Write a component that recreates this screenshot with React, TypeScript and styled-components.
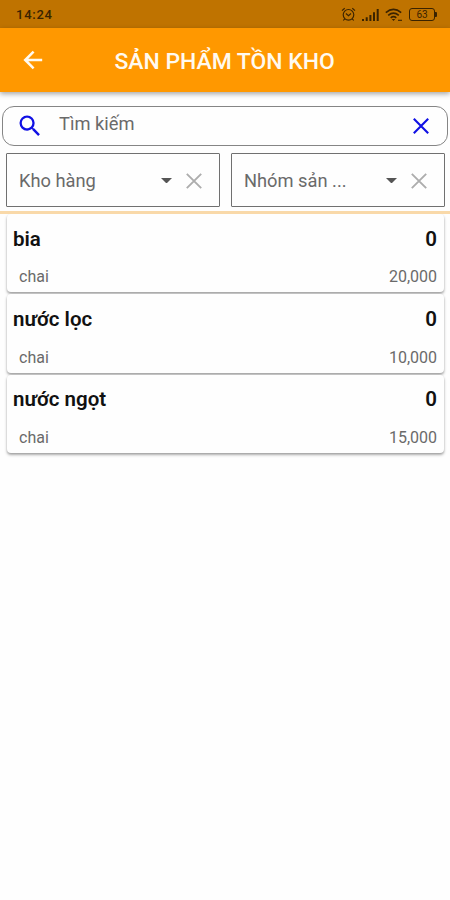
import React from "react";
import styled, { createGlobalStyle } from "styled-components";

const GlobalStyle = createGlobalStyle`
  * { box-sizing: border-box; }
  body {
    margin: 0;
    background: #fefefe;
    font-family: Roboto, "Noto Sans", sans-serif;
  }
  svg { display: block; flex: none; }
`;

const Screen = styled.div`
  width: 450px;
  height: 900px;
  overflow: hidden;
  display: flex;
  flex-direction: column;
`;

const StatusBar = styled.div`
  height: 28px;
  flex: none;
  display: flex;
  align-items: center;
  justify-content: space-between;
  padding: 1px 13px 0 16px;
  background: #bf7300;
  color: #3a2300;
`;

const Clock = styled.span`
  font-size: 13px;
  font-weight: 500;
  line-height: 16px;
  letter-spacing: 0.75px;
`;

const StatusIcons = styled.div`
  display: flex;
  align-items: center;
  gap: 6px;
`;

const AppBar = styled.header`
  height: 64px;
  flex: none;
  display: flex;
  align-items: center;
  padding: 0 21px;
  background: #ff9800;
  color: #fffaf0;
  box-shadow: 0 2px 5px rgba(0, 0, 0, 0.35);
`;

const Title = styled.h1`
  margin: 3px 0 0;
  padding-left: 69.5px;
  font-size: 22.9px;
  font-weight: 500;
  line-height: 28px;
  white-space: nowrap;
`;

const SearchBox = styled.div`
  height: 40px;
  flex: none;
  margin: 14px 2px 0;
  padding: 0 14px 0 13px;
  display: flex;
  align-items: center;
  border: 1px solid #858585;
  border-radius: 12px;
  color: #1010e4;
`;

const Placeholder = styled.span`
  flex: 1;
  padding: 0 0 4px 15px;
  font-size: 18.3px;
  line-height: 24px;
  color: #6a6a6a;
`;

const Filters = styled.div`
  flex: none;
  display: grid;
  grid-template-columns: 1fr 1fr;
  gap: 11px;
  padding: 7px 5px 4px 6px;
`;

const Select = styled.div`
  height: 54px;
  display: flex;
  align-items: center;
  padding: 1px 13px 0 12px;
  border: 1px solid #707070;
  border-radius: 1px;
`;

const SelectLabel = styled.span`
  flex: 1;
  font-size: 18.3px;
  line-height: 24px;
  color: #6a6a6a;
  white-space: nowrap;
`;

const Arrow = styled.span`
  width: 11px;
  margin-right: 10px;
  border: 5.5px solid transparent;
  border-top-color: #555;
  border-bottom: 0;
`;

const Divider = styled.div`
  height: 3px;
  flex: none;
  background: #f9d9a9;
`;

const List = styled.main`
  display: flex;
  flex-direction: column;
  gap: 2px;
  padding: 0 6px 12px 7px;
  overflow: hidden;
`;

const Card = styled.article`
  height: 78.3px;
  flex: none;
  display: flex;
  flex-direction: column;
  gap: 16.7px;
  padding: 12.6px 7px 0 6px;
  border-radius: 4px;
  background: #fefefe;
  box-shadow: 0 2px 3px rgba(0, 0, 0, 0.3), 0 1px 2px rgba(0, 0, 0, 0.12);
`;

const Row = styled.div<{ $detail?: boolean }>`
  display: flex;
  justify-content: space-between;
  padding-left: ${(p) => (p.$detail ? "6px" : "0")};
  font-size: ${(p) => (p.$detail ? "16px" : "20.5px")};
  font-weight: ${(p) => (p.$detail ? 400 : 600)};
  line-height: ${(p) => (p.$detail ? "20px" : "24px")};
  color: ${(p) => (p.$detail ? "#6a6a6a" : "#111")};
`;

const AlarmIcon = () => (
  <svg width="15" height="15" viewBox="0 0 15 15" fill="none" stroke="currentColor" strokeWidth="1.15">
    <circle cx="7.5" cy="7.8" r="5.3" />
    <path d="M1 3.6 3.7 1.2M14 3.6 11.3 1.2M3.7 11.8 2.3 13.5M11.3 11.8l1.4 1.7M4.9 6.5l2.6 2.2 2.5-2.2" />
  </svg>
);

const SignalIcon = () => (
  <svg width="17" height="12" viewBox="0 0 17 12" fill="currentColor">
    <path d="M0 10h2v2H0zM3.7 8.2h2V12h-2zM7.4 6h2v6h-2zM11 3.3h2V12h-2zM14.7 0h2v12h-2z" />
  </svg>
);

const WifiIcon = () => (
  <svg width="18" height="14" viewBox="0 0 18 14" fill="none" stroke="currentColor" strokeWidth="1.6">
    <path d="M.8 4.6Q8.5-1.8 16.2 4.6M3.2 7.3q5.3-4.4 10.6 0M5.7 9.8q2.8-2.3 5.6 0" />
    <path d="m6.8 10.9 1.7 2 1.7-2z" fill="currentColor" stroke="none" />
    <path d="M13 12.3h4" strokeWidth="1.1" />
  </svg>
);

const BatteryShell = styled.div`
  display: flex;
  align-items: center;
`;

const BatteryBody = styled.span`
  width: 26px;
  height: 13px;
  border: 1.3px solid currentColor;
  border-radius: 3px;
  font-size: 10px;
  line-height: 12px;
  text-align: center;
`;

const BatteryTip = styled.span`
  width: 2px;
  height: 5px;
  border-radius: 0 1px 1px 0;
  background: currentColor;
`;

const BackIcon = () => (
  <svg width="24" height="24" viewBox="0 0 24 24" fill="none" stroke="currentColor" strokeWidth="2.5">
    <path d="M21.2 12H4.2M12.6 3.6 4.2 12l8.4 8.4" />
  </svg>
);

const SearchIcon = () => (
  <svg width="28" height="28" viewBox="0 0 24 24" fill="currentColor">
    <path d="M15.5 14h-.79l-.28-.27A6.471 6.471 0 0 0 16 9.5 6.5 6.5 0 1 0 9.5 16c1.61 0 3.09-.59 4.23-1.57l.27.28v.79l5 4.99L20.49 19l-4.99-5zm-6 0C7.01 14 5 11.99 5 9.5S7.01 5 9.5 5 14 7.01 14 9.5 11.99 14 9.5 14z" />
  </svg>
);

const CloseIcon = ({ color, weight = 2.1 }: { color: string; weight?: number }) => (
  <svg width="24" height="24" viewBox="0 0 24 24" fill="none" stroke={color} strokeWidth={weight}>
    <path d="m4.8 4.8 14.4 14.4M19.2 4.8 4.8 19.2" />
  </svg>
);

const products = [
  { name: "bia", stock: 0, unit: "chai", price: "20,000" },
  { name: "nước lọc", stock: 0, unit: "chai", price: "10,000" },
  { name: "nước ngọt", stock: 0, unit: "chai", price: "15,000" },
];

const filters = ["Kho hàng", "Nhóm sản ..."];

export default function App() {
  return (
    <Screen>
      <GlobalStyle />
      <StatusBar>
        <Clock>14:24</Clock>
        <StatusIcons>
          <AlarmIcon />
          <SignalIcon />
          <WifiIcon />
          <BatteryShell>
            <BatteryBody>63</BatteryBody>
            <BatteryTip />
          </BatteryShell>
        </StatusIcons>
      </StatusBar>
      <AppBar>
        <BackIcon />
        <Title>SẢN PHẨM TỒN KHO</Title>
      </AppBar>
      <SearchBox>
        <SearchIcon />
        <Placeholder>Tìm kiếm</Placeholder>
        <CloseIcon color="#1010e4" />
      </SearchBox>
      <Filters>
        {filters.map((label) => (
          <Select key={label}>
            <SelectLabel>{label}</SelectLabel>
            <Arrow />
            <CloseIcon color="#adadad" weight={1.9} />
          </Select>
        ))}
      </Filters>
      <Divider />
      <List>
        {products.map((product) => (
          <Card key={product.name}>
            <Row>
              <span>{product.name}</span>
              <span>{product.stock}</span>
            </Row>
            <Row $detail>
              <span>{product.unit}</span>
              <span>{product.price}</span>
            </Row>
          </Card>
        ))}
      </List>
    </Screen>
  );
}
